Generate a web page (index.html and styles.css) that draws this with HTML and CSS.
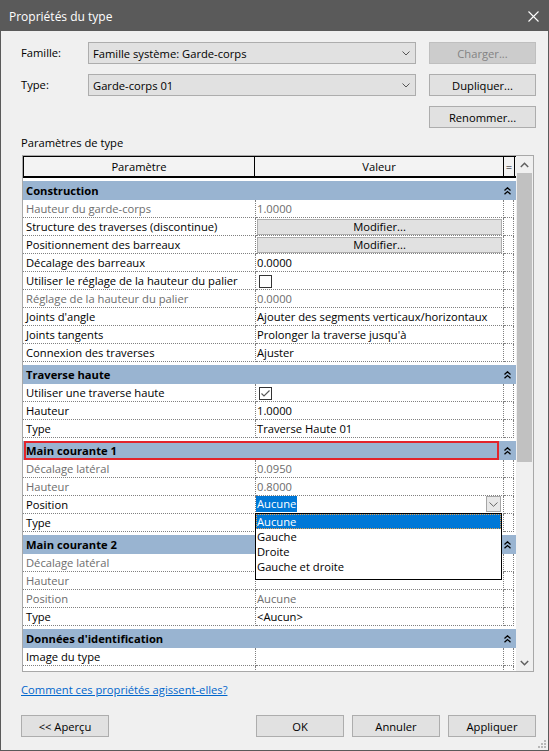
FILE: index.html
```html
<!DOCTYPE html>
<html lang="fr">
<head>
<meta charset="utf-8">
<title>Propriétés du type</title>
<link rel="stylesheet" href="styles.css">
</head>
<body>
<div class="win">
  <div class="titlebar">
    <span class="title">Propriétés du type</span>
    <svg class="close" width="11" height="11" viewBox="0 0 11 11"><path d="M0.5 0.5L10.5 10.5M10.5 0.5L0.5 10.5" stroke="#fff" stroke-width="1.1" fill="none"/></svg>
  </div>
  <div class="content">
    <div class="topform">
      <span class="lbl">Famille:</span>
      <div class="combo"><span>Famille système: Garde-corps</span><svg width="8" height="5" viewBox="0 0 8 5"><path d="M0.5 0.5L4 4L7.5 0.5" stroke="#555" fill="none"/></svg></div>
      <div class="btn tbtn disabled">Charger...</div>
      <span class="lbl">Type:</span>
      <div class="combo"><span>Garde-corps 01</span><svg width="8" height="5" viewBox="0 0 8 5"><path d="M0.5 0.5L4 4L7.5 0.5" stroke="#555" fill="none"/></svg></div>
      <div class="btn tbtn">Dupliquer...</div>
      <div class="btn tbtn col3">Renommer...</div>
    </div>
    <div class="sect">Paramètres de type</div>
    <div class="gridbox">
      <div class="table">
        <div class="thead"><div class="th">Paramètre</div><div class="th">Valeur</div><div class="th">=</div><div></div></div>

        <div class="grp"><div class="p">Construction</div><div></div><div class="e"><svg width="7" height="8" viewBox="0 0 7 8"><path d="M0.5 3.5L3.5 0.8L6.5 3.5M0.5 7.2L3.5 4.5L6.5 7.2" stroke="#000" stroke-width="1.3" fill="none"/></svg></div><div></div></div>
        <div class="row gray"><div class="p">Hauteur du garde-corps</div><div class="v">1.0000</div><div class="e"></div><div></div></div>
        <div class="row"><div class="p">Structure des traverses (discontinue)</div><div class="v"><div class="mbtn">Modifier...</div></div><div class="e"></div><div></div></div>
        <div class="row"><div class="p">Positionnement des barreaux</div><div class="v"><div class="mbtn">Modifier...</div></div><div class="e"></div><div></div></div>
        <div class="row"><div class="p">Décalage des barreaux</div><div class="v">0.0000</div><div class="e"></div><div></div></div>
        <div class="row"><div class="p">Utiliser le réglage de la hauteur du palier</div><div class="v"><span class="cb"></span></div><div class="e"></div><div></div></div>
        <div class="row gray"><div class="p">Réglage de la hauteur du palier</div><div class="v">0.0000</div><div class="e"></div><div></div></div>
        <div class="row"><div class="p">Joints d'angle</div><div class="v">Ajouter des segments verticaux/horizontaux</div><div class="e"></div><div></div></div>
        <div class="row"><div class="p">Joints tangents</div><div class="v">Prolonger la traverse jusqu'à</div><div class="e"></div><div></div></div>
        <div class="row"><div class="p">Connexion des traverses</div><div class="v">Ajuster</div><div class="e"></div><div></div></div>

        <div class="grp"><div class="p">Traverse haute</div><div></div><div class="e"><svg width="7" height="8" viewBox="0 0 7 8"><path d="M0.5 3.5L3.5 0.8L6.5 3.5M0.5 7.2L3.5 4.5L6.5 7.2" stroke="#000" stroke-width="1.3" fill="none"/></svg></div><div></div></div>
        <div class="row"><div class="p">Utiliser une traverse haute</div><div class="v"><span class="cb checked"><svg width="11" height="11" viewBox="0 0 11 11"><path d="M1.5 5.5L4 8L9.5 2.5" stroke="#555" stroke-width="1.1" fill="none"/></svg></span></div><div class="e"></div><div></div></div>
        <div class="row"><div class="p">Hauteur</div><div class="v">1.0000</div><div class="e"></div><div></div></div>
        <div class="row"><div class="p">Type</div><div class="v">Traverse Haute 01</div><div class="e"></div><div></div></div>

        <div class="grp"><div class="p">Main courante 1</div><div></div><div class="e"><svg width="7" height="8" viewBox="0 0 7 8"><path d="M0.5 3.5L3.5 0.8L6.5 3.5M0.5 7.2L3.5 4.5L6.5 7.2" stroke="#000" stroke-width="1.3" fill="none"/></svg></div><div></div><span class="redbox"></span></div>
        <div class="row gray"><div class="p">Décalage latéral</div><div class="v">0.0950</div><div class="e"></div><div></div></div>
        <div class="row gray"><div class="p">Hauteur</div><div class="v">0.8000</div><div class="e"></div><div></div></div>
        <div class="row"><div class="p">Position</div><div class="v sel"><span class="hl">Aucune</span><span class="ddbtn"><svg width="9" height="5" viewBox="0 0 9 5"><path d="M0.5 0.5L4.5 4.3L8.5 0.5" stroke="#666" fill="none"/></svg></span></div><div class="e"></div><div></div></div>
        <div class="row"><div class="p">Type</div><div class="v"></div><div class="e"></div><div></div></div>

        <div class="grp"><div class="p">Main courante 2</div><div></div><div class="e"><svg width="7" height="8" viewBox="0 0 7 8"><path d="M0.5 3.5L3.5 0.8L6.5 3.5M0.5 7.2L3.5 4.5L6.5 7.2" stroke="#000" stroke-width="1.3" fill="none"/></svg></div><div></div></div>
        <div class="row gray"><div class="p">Décalage latéral</div><div class="v"></div><div class="e"></div><div></div></div>
        <div class="row gray"><div class="p">Hauteur</div><div class="v"></div><div class="e"></div><div></div></div>
        <div class="row gray"><div class="p">Position</div><div class="v">Aucune</div><div class="e"></div><div></div></div>
        <div class="row"><div class="p">Type</div><div class="v">&lt;Aucun&gt;</div><div class="e"></div><div></div></div>

        <div class="grp"><div class="p">Données d'identification</div><div></div><div class="e"><svg width="7" height="8" viewBox="0 0 7 8"><path d="M0.5 3.5L3.5 0.8L6.5 3.5M0.5 7.2L3.5 4.5L6.5 7.2" stroke="#000" stroke-width="1.3" fill="none"/></svg></div><div></div></div>
        <div class="row"><div class="p">Image du type</div><div class="v"></div><div class="e"></div><div></div></div>
        <div class="row"><div class="p">Note d'identification</div><div class="v"></div><div class="e"></div><div></div></div>

        <div class="dd">
          <div class="ddi on">Aucune</div>
          <div class="ddi">Gauche</div>
          <div class="ddi">Droite</div>
          <div class="ddi">Gauche et droite</div>
        </div>
      </div>
      <div class="scroll">
        <div class="sbarrow"><svg width="9" height="6" viewBox="0 0 9 6"><path d="M0.8 5L4.5 1.3L8.2 5" stroke="#606060" stroke-width="1.5" fill="none"/></svg></div>
        <div class="thumb"></div>
        <div class="track"></div>
        <div class="sbarrow"><svg width="9" height="6" viewBox="0 0 9 6"><path d="M0.8 1L4.5 4.7L8.2 1" stroke="#606060" stroke-width="1.5" fill="none"/></svg></div>
      </div>
    </div>
    <a class="help" href="#">Comment ces propriétés agissent-elles?</a>
    <div class="footer">
      <div class="btn fb first">&lt;&lt; Aperçu</div>
      <div class="btn fb">OK</div>
      <div class="btn fb">Annuler</div>
      <div class="btn fb">Appliquer</div>
    </div>
  </div>
  <svg class="grip" width="9" height="9" viewBox="0 0 9 9"><g fill="#b8b8b8"><rect x="7" y="1" width="2" height="2"/><rect x="4" y="4" width="2" height="2"/><rect x="7" y="4" width="2" height="2"/><rect x="1" y="7" width="2" height="2"/><rect x="4" y="7" width="2" height="2"/><rect x="7" y="7" width="2" height="2"/></g></svg>
</div>
</body>
</html>
```
FILE: styles.css
```css
* { box-sizing: border-box; margin: 0; padding: 0; }
body {
  margin: 0;
  font-family: "Open Sans", "Noto Sans", sans-serif;
  font-size: 11.2px;
  color: #000;
  background: #f0f0f0;
}
.win {
  width: 549px;
  height: 751px;
  border: 1px solid #5a5a5a;
  background: #f0f0f0;
  position: relative;
  display: flex;
  flex-direction: column;
}
.titlebar {
  height: 30px;
  flex: none;
  background: #5a5a5a;
  color: #fff;
  font-size: 12px;
  display: flex;
  align-items: center;
  justify-content: space-between;
  padding: 0 9px 0 8px;
}
.content {
  padding: 11px 12px 0 20px;
  display: flex;
  flex-direction: column;
}
.topform {
  display: grid;
  grid-template-columns: 67px 328px 120px;
  grid-auto-rows: 22px;
  row-gap: 10px;
}
.lbl { align-self: center; line-height: 16px; }
.combo {
  background: #e1e1e1;
  border: 1px solid #adadad;
  display: flex;
  align-items: center;
  justify-content: space-between;
  padding: 0 5px 0 4px;
}
.btn {
  background: #e1e1e1;
  border: 1px solid #adadad;
  display: flex;
  align-items: center;
  justify-content: center;
}
.tbtn { width: 107px; justify-self: end; }
.btn.disabled { background: #cccccc; border-color: #bfbfbf; color: #838383; }
.col3 { grid-column: 3; }
.sect { margin-top: 7px; line-height: 16px; height: 16px; }
.gridbox {
  margin-top: 4px;
  margin-left: 1px;
  width: 512px;
  height: 517px;
  border: 1px solid #a8a8a8;
  background: #fff;
  display: flex;
}
.table {
  width: 493px;
  height: 515px;
  overflow: hidden;
  position: relative;
  background: #fff;
}
.thead {
  display: grid;
  grid-template-columns: 231px 249px 11px 1px;
  height: 22px;
  border-left: 1px solid #000;
  border-top: 1px solid #000;
  border-bottom: 2px solid #000;
  background: #f3f3f3;
}
.th {
  border-right: 1px solid #000;
  text-align: center;
  line-height: 19px;
}
.grp {
  margin-top: 3px;
  height: 19px;
  background: #99b4d1;
  display: grid;
  grid-template-columns: 233px 248px 10px 2px;
  font-weight: 700;
  line-height: 19px;
  position: relative;
}
.grp .p { padding-left: 3px; }
.grp .e { display: flex; align-items: center; }
.row {
  height: 18px;
  display: grid;
  grid-template-columns: 233px 248px 10px 2px;
  line-height: 17px;
  white-space: nowrap;
}
.row > .p, .row > .v, .row > .e {
  border-bottom: 1px dotted #808080;
  border-right: 1px dotted #808080;
  overflow: hidden;
}
.row .p { padding-left: 3px; }
.row .v { padding-left: 1px; }
.gray { color: #6d6d6d; }
.mbtn {
  margin: 1px 1px 0 0;
  height: 16px;
  background: #e1e1e1;
  border: 1px solid #adadad;
  text-align: center;
  line-height: 14px;
  color: #000;
}
.cb {
  display: block;
  width: 13px;
  height: 13px;
  margin: 3px 0 0 2px;
  border: 1px solid #333;
  background: #fff;
}
.cb svg { display: block; }
.v.sel { display: flex; align-items: flex-start; padding-left: 0; }
.hl {
  background: #0078d7;
  color: #fff;
  height: 16px;
  line-height: 16px;
  padding: 0 1px;
}
.ddbtn {
  margin-left: auto;
  margin-right: 2px;
  width: 15px;
  height: 16px;
  background: #e8e8e8;
  border: 1px solid #a6a6a6;
  display: flex;
  align-items: center;
  justify-content: center;
}
.redbox {
  position: absolute;
  left: 1px;
  top: 0;
  width: 475px;
  height: 19px;
  border: 2px solid #e3242b;
}
.dd {
  position: absolute;
  left: 232px;
  top: 357px;
  width: 247px;
  height: 67px;
  border: 1px solid #000;
  background: #fff;
}
.ddi { height: 15px; line-height: 15px; padding-left: 1px; }
.ddi.on { background: #0078d7; color: #fff; outline: 1px dotted #e8a050; outline-offset: -1px; }
.scroll {
  width: 17px;
  background: #f0f0f0;
  display: flex;
  flex-direction: column;
}
.sbarrow {
  height: 17px;
  flex: none;
  display: flex;
  align-items: center;
  justify-content: center;
}
.thumb { height: 289px; flex: none; margin: 0 1px; background: #c1c1c1; }
.track { flex: 1; }
.help {
  margin-top: 10px;
  display: block;
  width: fit-content;
  line-height: 16px;
  color: #0066cc;
  text-decoration: underline;
}
.footer {
  margin-top: 17px;
  display: flex;
  gap: 8px;
}
.fb { width: 88px; height: 22px; }
.fb.first { margin-right: auto; }
.grip { position: absolute; right: 2px; bottom: 2px; }
```
